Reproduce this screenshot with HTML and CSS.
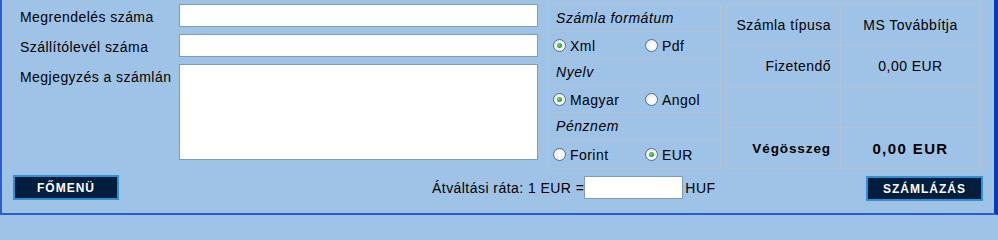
FILE: index.html
```html
<!DOCTYPE html>
<html lang="hu">
<head>
<meta charset="utf-8">
<title>Számlázás</title>
<link rel="stylesheet" href="styles.css">
</head>
<body>
<div class="frame">
  <div class="top">
    <div class="form">
      <label class="lbl">Megrendelés száma</label>
      <input class="field" type="text">
      <label class="lbl">Szállítólevél száma</label>
      <input class="field" type="text">
      <label class="lbl">Megjegyzés a számlán</label>
      <textarea class="field area"></textarea>
    </div>

    <table class="opts">
      <tr><td class="head">Számla formátum</td></tr>
      <tr><td><div class="radios">
        <label class="opt"><input class="radio" type="radio" name="f" checked>Xml</label>
        <label class="opt"><input class="radio" type="radio" name="f">Pdf</label>
      </div></td></tr>
      <tr><td class="head">Nyelv</td></tr>
      <tr><td><div class="radios">
        <label class="opt"><input class="radio" type="radio" name="l" checked>Magyar</label>
        <label class="opt"><input class="radio" type="radio" name="l">Angol</label>
      </div></td></tr>
      <tr><td class="head">Pénznem</td></tr>
      <tr class="last"><td><div class="radios">
        <label class="opt"><input class="radio" type="radio" name="c">Forint</label>
        <label class="opt"><input class="radio" type="radio" name="c" checked>EUR</label>
      </div></td></tr>
    </table>

    <table class="summary">
      <tr><td class="k">Számla típusa</td><td class="v">MS Továbbítja</td></tr>
      <tr><td class="k">Fizetendő</td><td class="v">0,00 EUR</td></tr>
      <tr><td class="k"></td><td class="v"></td></tr>
      <tr><td class="k total">Végösszeg</td><td class="v totalv">0,00 EUR</td></tr>
    </table>
  </div>

  <div class="bottom">
    <button class="btn btn-menu" type="button">FŐMENÜ</button>
    <div class="rate">
      <span>Átváltási ráta: 1 EUR =</span>
      <input class="field rate-in" type="text">
      <span>HUF</span>
    </div>
    <button class="btn btn-bill" type="button">SZÁMLÁZÁS</button>
  </div>
</div>
</body>
</html>
```

FILE: styles.css
```css
html, body {
  margin: 0;
  padding: 0;
  background: #9fc3e7;
}

.frame {
  width: 998px;
  height: 215px;
  box-sizing: border-box;
  border-left: 2px solid #2a5cd6;
  border-right: 4px solid #0b3bb2;
  border-bottom: 2px solid #2a5cd6;
  background: #9fc3e7;
  padding-top: 4px;
  font-family: "Liberation Sans", Arial, sans-serif;
  font-size: 14px;
  letter-spacing: 0.45px;
  color: #000;
}

.top {
  display: flex;
  align-items: flex-start;
  height: 165px;
}

.form {
  margin-left: 18px;
  display: grid;
  grid-template-columns: 159px 359px;
  grid-template-rows: 23px 23px 96px;
  row-gap: 7px;
}

.lbl {
  line-height: 16px;
  padding-top: 5px;
  white-space: nowrap;
}

.field {
  box-sizing: border-box;
  margin: 0;
  border: 1px solid #7f9db9;
  background: #fff;
  width: 100%;
  height: 100%;
  font-family: "Liberation Sans", Arial, sans-serif;
  font-size: 13px;
  padding: 2px 3px;
  resize: none;
  outline: none;
}

/* options panel */
.opts {
  margin-left: 9px;
  width: 174px;
  border-collapse: collapse;
  border: 1px solid #b3c3d3;
}

.opts td {
  border: 1px solid #b3c3d3;
  height: 26px;
  padding: 0;
  vertical-align: middle;
}

.opts .last td {
  height: 28px;
}

.opts .head {
  font-style: italic;
  padding-left: 8px;
  line-height: 16px;
  letter-spacing: 0.55px;
}

.radios {
  display: grid;
  grid-template-columns: 92px 1fr;
  padding-left: 5px;
  padding-top: 1px;
}

.opt {
  display: flex;
  align-items: center;
  white-space: nowrap;
}

.radio {
  appearance: none;
  -webkit-appearance: none;
  box-sizing: border-box;
  width: 13px;
  height: 13px;
  margin: 0 4px 0 0;
  border: 1px solid #4f6f8f;
  border-radius: 50%;
  background: radial-gradient(circle at 60% 60%, #ffffff 0%, #f4f4f0 50%, #d9d9d2 100%);
  display: grid;
  place-items: center;
}

.radio:checked::after {
  content: "";
  width: 5px;
  height: 5px;
  border-radius: 50%;
  background: radial-gradient(circle at 40% 40%, #7ee07e 0%, #2aa12a 60%, #1a801a 100%);
}

/* summary table */
.summary {
  margin-left: 5px;
  width: 255px;
  border-collapse: collapse;
  border: 1px solid #b3c3d3;
}

.summary td {
  border: 1px solid #b3c3d3;
  height: 40px;
  padding: 0;
  vertical-align: middle;
  white-space: nowrap;
}

.summary .k {
  width: 104px;
  text-align: right;
  padding-right: 9px;
}

.summary .v {
  text-align: center;
}

.summary .total {
  font-weight: bold;
  font-size: 13.5px;
  letter-spacing: 0.9px;
}

.summary .totalv {
  font-weight: bold;
  font-size: 15px;
  letter-spacing: 1.4px;
}

/* bottom row */
.bottom {
  display: flex;
  align-items: flex-start;
  margin-top: 6px;
  padding: 0 11px;
}

.btn {
  box-sizing: border-box;
  height: 25px;
  margin: 0;
  padding: 0;
  border: 2px solid #2f90d4;
  background: #021d3d;
  color: #fff;
  font-family: "Liberation Sans", Arial, sans-serif;
  font-size: 12px;
  font-weight: bold;
  letter-spacing: 1px;
  text-align: center;
}

.btn-menu {
  width: 106px;
}

.btn-bill {
  width: 117px;
  margin-left: auto;
  margin-top: 1px;
}

.rate {
  display: flex;
  align-items: center;
  margin-left: 313px;
  margin-top: 1px;
  height: 23px;
  white-space: nowrap;
}

.rate-in {
  width: 99px;
  height: 23px;
  margin: 0 2px 0 0;
}
```
